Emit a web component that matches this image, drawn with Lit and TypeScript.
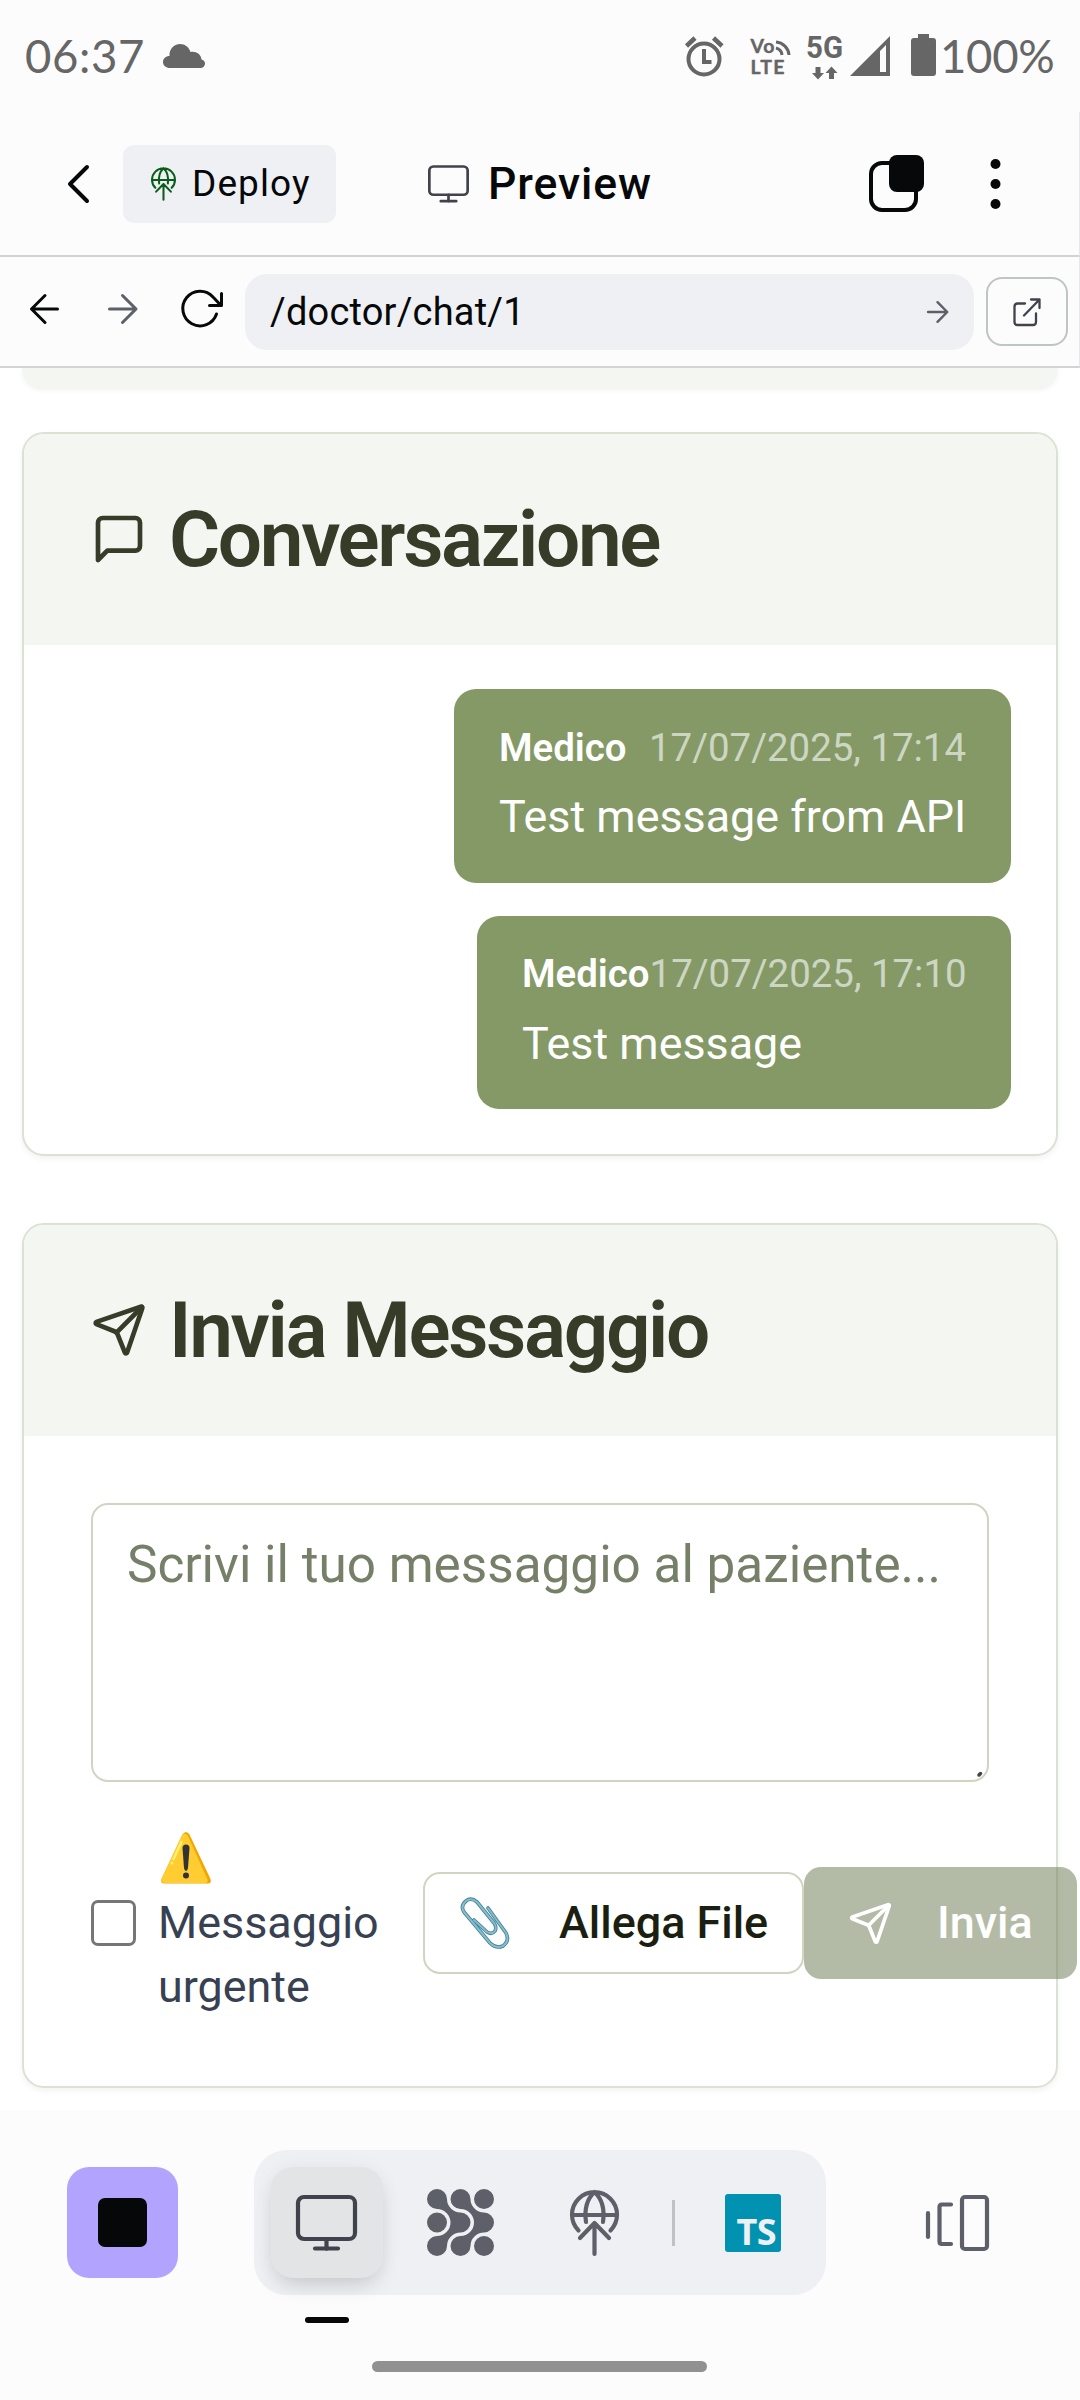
import { LitElement, html, css, svg } from "lit";
import { customElement } from "lit/decorators.js";

const send = svg`<path d="M14.536 21.686a.5.5 0 0 0 .937-.024l6.5-19a.496.496 0 0 0-.635-.635l-19 6.5a.5.5 0 0 0-.024.937l7.93 3.18a2 2 0 0 1 1.112 1.11z"/><path d="m21.854 2.147-10.94 10.939"/>`;
const monitor = svg`<rect x="2" y="2" width="57" height="42" rx="6"/><path d="M30.500 44v10M19 53.500h23"/>`;
const deploy = svg`<path d="M8.500 40.500A22.500 22.500 0 1 1 40.500 40.500M2 25h45M16 32c-2-14 2-24 8.500-30c6.500 6 10.500 16 8.500 30M24.500 64V33M10 48l14.500-15L39 48"/>`;
const arrowRight = svg`<path d="M1.500 15h26M14.500 1.500L28 15L14.500 28.500"/>`;
const strand = svg`<path d="M20 10A13.500 13.500 0 0 0 33.500 23.500A10 10 0 0 1 33.500 43.500A13.500 13.500 0 0 0 20 57A10 10 0 1 1 10 47A13.500 13.500 0 0 0 10 20A10 10 0 1 1 20 10z"/>`;

const messages = [
  { who: "Medico", when: "17/07/2025, 17:14", text: "Test message from API" },
  { who: "Medico", when: "17/07/2025, 17:10", text: "Test message" },
];

@customElement("app-root")
export class AppRoot extends LitElement {
  static styles = css`
    :host { display: block; width: 1080px; height: 2400px; overflow: hidden; background: #fff;
      font-family: Roboto, "Liberation Sans", sans-serif; color: #060809; }
    * { box-sizing: border-box; }
    svg { display: block; flex: none; fill: none; stroke: currentColor; stroke-linecap: round; stroke-linejoin: round; overflow: visible; }
    .page { display: flex; flex-direction: column; height: 2400px; width: 1080px; }
    .status { height: 112px; background: #fcfcfc; color: #666; display: flex; align-items: center;
      padding: 0 26px 0 25px; font-family: Lato, sans-serif; font-size: 45.500px; line-height: 54px; flex: none; }
    .status > * { flex: none; }
    .clock { width: 138px; white-space: nowrap; letter-spacing: .6px; }
    .sysicons { margin-left: auto; }
    .pct { width: 114px; white-space: nowrap; letter-spacing: -0.300px; }
    .fiveg { font: 700 31px Roboto, sans-serif; fill: #666; stroke: none; }
    .lte { font: 700 19.500px Lato, sans-serif; fill: #666; stroke: #666; stroke-width: .4px; }

    .top { height: 145px; flex: none; background: #fcfcfc; border-bottom: 2px solid #d2d3d4; border-right: 1px solid #e6e7e8;
      display: flex; align-items: center; padding: 0 78px 0 68px; }
    .deploy { display: flex; align-items: center; width: 213px; height: 78px; border-radius: 11px; background: #eff0f3;
      margin-left: 34px; padding-left: 28px; gap: 16px; font-size: 37px; line-height: 44px; letter-spacing: 1.100px; }
    .green { color: #0a5c1b; }
    .title { display: flex; align-items: center; gap: 19px; margin-left: 92px; font-size: 44.500px; line-height: 52px; font-weight: 500; letter-spacing: .9px; }
    .muted { color: #40434b; }
    .windows { margin-left: auto; margin-right: 67px; }
    .more { fill: #060809; stroke: none; }
    .url { height: 111px; flex: none; background: #fcfcfc; border-bottom: 2px solid #d2d3d4; border-right: 1px solid #e6e7e8;
      display: flex; align-items: center; padding: 0 11px 0 30px; }
    .fwd { margin-left: 49px; color: #5d6068; }
    .reload { margin-left: 45px; }
    .lift { margin-bottom: 6px; }
    .field { display: flex; align-items: center; justify-content: space-between; margin-left: 22px; width: 729px; height: 76px;
      border-radius: 22px; background: #eff0f3; padding: 0 26px 0 25px; font-size: 38px; line-height: 46px; letter-spacing: .2px; }
    .go { color: #5d6068; }
    .open { display: flex; align-items: center; justify-content: center; width: 82px; height: 69px; border: 2px solid #bfc4c4;
      border-radius: 16px; margin-left: 12px; color: #40434b; }

    .content { height: 1742px; flex: none; display: flex; flex-direction: column; align-items: flex-start; padding-left: 22px; overflow: hidden; background: #fff; }
    .prev { width: 1036px; height: 20px; flex: none; border-radius: 0 0 22px 22px; background: #f4f6f1; box-shadow: 0 2px 5px rgba(0,0,0,.06); }
    .card { width: 1036px; flex: none; border: 2px solid #dbe1d3; border-radius: 22px; background: #fff; box-shadow: 0 3px 6px rgba(0,0,0,.05); }
    .chat { margin-top: 44px; height: 724px; }
    .compose { margin-top: 67px; height: 865px; }
    .head { display: flex; align-items: center; gap: 22px; height: 211px; padding: 0 67px 2px; background: #f4f6f1; border-radius: 20px 20px 0 0;
      color: #363c28; font-size: 78.300px; line-height: 92px; font-weight: 600; letter-spacing: -2.350px; white-space: nowrap; }
    .list { display: flex; flex-direction: column; align-items: flex-end; gap: 33px; padding: 44px 45px 0; }
    .bubble { height: 194px; border-radius: 22px; background: #849966; color: #fff; padding: 31px 45px 0; }
    .b0 { width: 557px; }
    .b1 { width: 534px; height: 193px; padding-top: 30px; }
    .meta { display: flex; justify-content: space-between; font-size: 38.400px; line-height: 56px; white-space: nowrap; }
    .who { font-weight: 600; }
    .when { opacity: .6; }
    .body { margin-top: 9px; font-size: 44.850px; line-height: 64px; white-space: nowrap; }
    .b1 .body { margin-top: 10px; }

    .form { padding: 67px 0 0 67px; }
    .area { position: relative; width: 898px; height: 279px; border: 2px solid #ced6c2; border-radius: 17px; padding: 28px 34px;
      color: #768068; font-size: 51.250px; line-height: 64px; white-space: nowrap; }
    .grip { position: absolute; right: 4px; bottom: 3px; color: #444; }
    .actions { display: flex; align-items: center; margin-top: 45px; height: 192px; white-space: nowrap; font-size: 44.900px; line-height: 64px; }
    .check { width: 45px; height: 46px; border: 3px solid #767676; border-radius: 7px; flex: none; margin-bottom: 1px; }
    .label { width: 265px; margin-left: 22px; color: #374151; flex: none; }
    .warnrow { height: 64px; padding: 5px 0 0 3px; }
    .warn { stroke: none; }
    .attach { display: flex; align-items: center; flex: none; width: 381px; height: 102px; border: 2px solid #ced6c2; border-radius: 17px;
      padding-left: 35px; gap: 49px; font-weight: 500; color: #1a1f12; }
    .send { display: flex; align-items: center; flex: none; width: 273px; height: 112px; border-radius: 17px; background: #697951; opacity: .5;
      color: #fff; font-weight: 500; padding-left: 44px; gap: 44px; }

    .foot { height: 290px; flex: none; background: #fcfcfc; display: flex; flex-direction: column; }
    .bar { display: flex; align-items: center; padding: 40px 0 0 67px; height: 185px; }
    .stop { width: 111px; height: 111px; border-radius: 22px; background: #b2a3ff; display: flex; align-items: center; justify-content: center; }
    .square { width: 49px; height: 49px; border-radius: 7px; background: #050709; }
    .dock { margin-left: 76px; width: 572px; height: 145px; border-radius: 33px; background: #eff0f3; display: flex; align-items: center; padding: 0 45px 0 17px; color: #5d6068; }
    .tab { width: 112px; height: 111px; border-radius: 22px; background: #e3e4e6; color: #40434b; display: flex; align-items: center; justify-content: center;
      padding-right: 2px; box-shadow: 0 11px 22px -6px rgba(0,0,0,.17), 0 0 22px rgba(0,0,0,.04); }
    .dots { margin-left: 44px; fill: #5d6068; stroke: none; }
    .globe { margin-left: 76px; }
    .sep { width: 3px; height: 46px; background: #bfc2c5; margin-left: 53px; }
    .ts { margin-left: auto; width: 56px; height: 58px; border-radius: 3px; background: #0092b0; color: #eff0f3;
      font: 700 36px/40px "Noto Sans", sans-serif; padding: 18px 5px 0 0; text-align: right; letter-spacing: -0.500px; }
    .panels { margin-left: 100px; color: #5d6068; }
    .mark { width: 44px; height: 6px; border-radius: 3px; background: #050709; margin: 22px 0 0 305px; }
    .home { width: 335px; height: 11px; border-radius: 6px; background: #919191; margin: 38px 0 0 372px; }
  `;

  render() {
    return html`<div class="page">
      <div class="status">
        <span class="clock">06:37</span>
        <svg width="42" height="24" viewBox="0 0 42 24"><path fill="#666" stroke="none" d="M7 24C3 24 0 21.500 0 18s3-6 6.500-6C6 5 11 0 17 0c5 0 9 3 10.500 8C33 7 38 10 38.500 15.500c2 .5 3.500 2 3.500 4c0 2.500-2 4.500-4.500 4.500z"/></svg>
        <svg class="sysicons" width="257" height="46" viewBox="683 33 257 46">
          <g stroke-width="4" stroke-linecap="butt"><circle cx="704" cy="59" r="15.500"/><path d="M704 49v13h7.500" stroke-linejoin="miter"/><path d="M686.500 46l8.500-8M722 46l-8.500-8" stroke-width="4.500"/></g>
          <text class="lte" x="750.500" y="53" textLength="24">Vo</text><text class="lte" x="750.500" y="74" textLength="34">LTE</text>
          <path d="M776 48a8 8 0 0 1 6 7M776 42a14 14 0 0 1 13 13" stroke-width="3" stroke-linecap="butt"/>
          <text class="fiveg" x="806" y="58" textLength="37" lengthAdjust="spacingAndGlyphs">5G</text>
          <path fill="#666" stroke="none" d="M815.500 67h5v6h3.500l-6 6.500l-6-6.500h3.500zM829 79h5v-6h3.500l-6-6.500l-6 6.500h3.500z"/>
          <path fill="#666" fill-rule="evenodd" stroke="none" d="M890 36v40h-40zM880 51v21h6V45z"/>
          <path fill="#666" stroke="none" d="M918 34h11v4h4q3 0 3 3v32q0 3-3 3h-19q-3 0-3-3v-32q0-3 3-3h4z"/>
        </svg>
        <span class="pct">100%</span>
      </div>
      <div class="top">
        <svg width="21" height="38" viewBox="0 0 21 38" stroke-width="4"><path d="M19 2L2 19l17 17"/></svg>
        <div class="deploy"><svg class="green" width="25" height="34" viewBox="0 0 49 66" stroke-width="4">${deploy}</svg><span>Deploy</span></div>
        <div class="title"><svg class="muted" width="41" height="38" viewBox="0 0 61 56" stroke-width="4">${monitor}</svg><span>Preview</span></div>
        <svg class="windows" width="55" height="57" viewBox="0 0 55 57"><rect x="2" y="8" width="45" height="47" rx="11" stroke-width="4"/><rect x="20" y="0" width="35" height="37" rx="8" fill="#060809" stroke="none"/></svg>
        <svg class="more" width="10" height="50" viewBox="0 0 10 50"><circle cx="4.500" cy="5" r="5"/><circle cx="4.500" cy="25" r="5"/><circle cx="4.500" cy="45" r="5"/></svg>
      </div>
      <div class="url">
        <svg class="lift" width="29" height="30" viewBox="0 0 29 30" stroke-width="3"><path d="M27.500 15h-26M15 1.500L1.500 15L15 28.500"/></svg>
        <svg class="fwd lift" width="29" height="30" viewBox="0 0 29 30" stroke-width="3">${arrowRight}</svg>
        <svg class="reload lift" width="41" height="38" viewBox="0 0 41 38" stroke-width="3"><path d="M34.500 24A17.300 17.300 0 1 1 31 7l8 8.500M39.500 3.500v12h-12"/></svg>
        <div class="field"><span>/doctor/chat/1</span><svg class="go" width="21" height="22" viewBox="0 0 29 30" stroke-width="3.400">${arrowRight}</svg></div>
        <div class="open"><svg width="28" height="28" viewBox="0 0 28 28" stroke-width="2.300"><path d="M12 5.500H4.500q-3 0-3 3v15.500q0 3 3 3h15.500q3 0 3-3V15.500M18 1.500h8.500v8.500M26.500 1.500L11 17.500"/></svg></div>
      </div>
      <div class="content">
        <div class="prev"></div>
        <section class="card chat">
          <div class="head"><svg width="56" height="56" viewBox="0 0 24 24" stroke-width="2"><path d="M21 15a2 2 0 0 1-2 2H7l-4 4V5a2 2 0 0 1 2-2h14a2 2 0 0 1 2 2z"/></svg><span>Conversazione</span></div>
          <div class="list">${messages.map((m, i) => html`
            <div class="bubble b${i}"><div class="meta"><span class="who">${m.who}</span><span class="when">${m.when}</span></div><div class="body">${m.text}</div></div>`)}
          </div>
        </section>
        <section class="card compose">
          <div class="head"><svg width="56" height="56" viewBox="0 0 24 24" stroke-width="2">${send}</svg><span>Invia Messaggio</span></div>
          <div class="form">
            <div class="area">Scrivi il tuo messaggio al paziente...<svg class="grip" width="6" height="6" viewBox="0 0 6 6" stroke-width="3.500"><path d="M2 4l1.500-1.500"/></svg></div>
            <div class="actions">
              <div class="check"></div>
              <div class="label">
                <div class="warnrow"><svg class="warn" width="50" height="52" viewBox="0 0 50 52"><path d="M21.500 2.500q3.500-5 7 0L49.500 47q1.500 4.500-3 4.500h-43Q-1 51.500.5 47z" fill="#f2a600"/><path d="M20.500 4q3.500-4.500 6.500 0L46.500 47.500q1 3.500-3 3.500h-40Q-.5 50.500.5 47z" fill="#ffcc32"/><path d="M20.500 10l-8 17" stroke="#fff170" stroke-width="2.500"/><circle cx="11" cy="31" r="1.500" fill="#fff170"/><path d="M21.500 16q0-3.500 3.500-3.500t3.500 3.500L27 36q-.5 3-2 3t-2-3z" fill="#333"/><circle cx="25" cy="43.500" r="3" fill="#333"/></svg></div>
                <div>Messaggio</div><div>urgente</div>
              </div>
              <div class="attach"><svg width="50" height="52" viewBox="0 0 50 52"><g stroke="#417f92" stroke-width="3.600"><path d="M14 23l13 12q5 3 8-1q2-4-1-8L17 5q-6-5-11-1Q0 9 4 15l26 31q6 6 13 3q7-5 3-13L28 11"/></g><g stroke="#86bdce" stroke-width="2"><path d="M14 23l13 12q5 3 8-1q2-4-1-8L17 5q-6-5-11-1Q0 9 4 15l26 31q6 6 13 3q7-5 3-13L28 11"/></g></svg><span>Allega File</span></div>
              <div class="send"><svg width="45" height="45" viewBox="0 0 24 24" stroke-width="2">${send}</svg><span>Invia</span></div>
            </div>
          </div>
        </section>
      </div>
      <div class="foot">
        <div class="bar">
          <div class="stop"><div class="square"></div></div>
          <div class="dock">
            <div class="tab"><svg width="61" height="56" viewBox="0 0 61 56" stroke-width="4.200">${monitor}</svg></div>
            <svg class="dots" width="67" height="67" viewBox="0 0 67 67">${strand}<g transform="translate(23.500 0)"><path d="M20 10A13.500 13.500 0 0 0 33.500 23.500A10 10 0 0 1 33.500 43.500A13.500 13.500 0 0 0 20 57A10 10 0 1 1 10 47A13.500 13.500 0 0 0 10 20A10 10 0 1 1 20 10z"/></g><circle cx="10" cy="33.500" r="10"/><circle cx="57" cy="10" r="10"/><circle cx="57" cy="57" r="10"/></svg>
            <svg class="globe" width="49" height="66" viewBox="0 0 49 66" stroke-width="4.200">${deploy}</svg>
            <div class="sep"></div>
            <div class="ts">TS</div>
          </div>
          <svg class="panels" width="63" height="56" viewBox="0 0 63 56" stroke-width="4.200"><path d="M2 18v24M25 9.500H16q-2.500 0-2.500 2.500v34.500q0 2.500 2.500 2.500h9"/><rect x="36" y="2" width="25" height="52" rx="3"/></svg>
        </div>
        <div class="mark"></div>
        <div class="home"></div>
      </div>
    </div>`;
  }
}
